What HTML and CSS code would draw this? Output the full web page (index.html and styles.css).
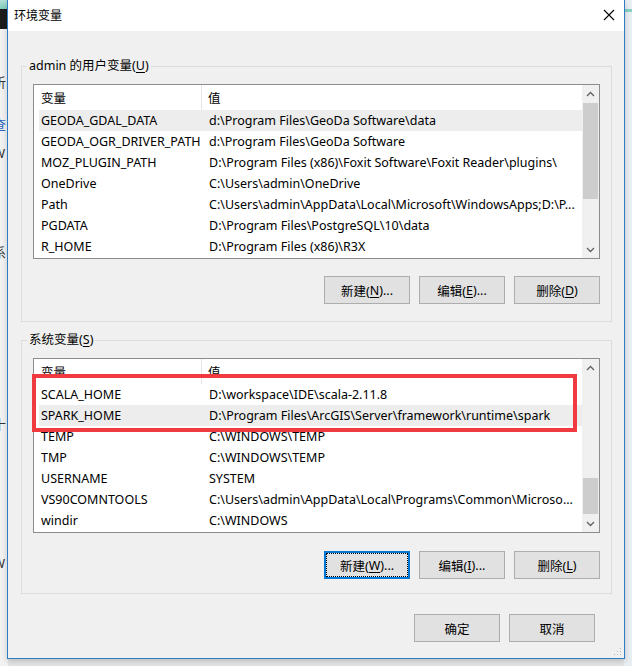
FILE: index.html
```html
<!DOCTYPE html>
<html lang="zh-CN">
<head>
<meta charset="utf-8">
<title>环境变量</title>
<link rel="stylesheet" href="styles.css">
</head>
<body>
<div class="desk">
  <div class="backwin">
    <div class="bw-top"></div>
    <div class="bw-dark"></div>
    <div class="bw-frag f1">析</div>
    <div class="bw-frag f2">查</div>
    <div class="bw-frag f3">W</div>
    <div class="bw-frag f4">系</div>
    <div class="bw-frag f5">十</div>
    <div class="bw-frag f6">W</div>
  </div>
  <div class="rightwin"><div class="rw-band"></div></div>

  <div class="dialog">
    <div class="titlebar">
      <span class="title">环境变量</span>
      <svg class="close" width="12" height="12" viewBox="0 0 12 12"><path d="M1 1 L11 11 M11 1 L1 11" stroke="#000" stroke-width="1.1" fill="none"/></svg>
    </div>
    <div class="body">
      <fieldset class="group g1">
        <legend>admin 的用户变量(<u>U</u>)</legend>
        <div class="list">
          <div class="list-main">
            <div class="hdr"><div class="hc1">变量</div><div class="hc2">值</div></div>
            <div class="row sel"><div class="c1">GEODA_GDAL_DATA</div><div class="c2">d:\Program Files\GeoDa Software\data</div></div>
            <div class="row"><div class="c1">GEODA_OGR_DRIVER_PATH</div><div class="c2">d:\Program Files\GeoDa Software</div></div>
            <div class="row"><div class="c1">MOZ_PLUGIN_PATH</div><div class="c2">D:\Program Files (x86)\Foxit Software\Foxit Reader\plugins\</div></div>
            <div class="row"><div class="c1">OneDrive</div><div class="c2">C:\Users\admin\OneDrive</div></div>
            <div class="row"><div class="c1">Path</div><div class="c2">C:\Users\admin\AppData\Local\Microsoft\WindowsApps;D:\P...</div></div>
            <div class="row"><div class="c1">PGDATA</div><div class="c2">D:\Program Files\PostgreSQL\10\data</div></div>
            <div class="row"><div class="c1">R_HOME</div><div class="c2">D:\Program Files (x86)\R3X</div></div>
          </div>
          <div class="sb">
            <div class="sb-btn"><svg width="9" height="6" viewBox="0 0 9 6"><path d="M1 5 L4.5 1.5 L8 5" stroke="#606060" stroke-width="1.3" fill="none"/></svg></div>
            <div class="sb-track"><div class="thumb t1"></div></div>
            <div class="sb-btn"><svg width="9" height="6" viewBox="0 0 9 6"><path d="M1 1 L4.5 4.5 L8 1" stroke="#606060" stroke-width="1.3" fill="none"/></svg></div>
          </div>
        </div>
        <div class="btns">
          <div class="btn">新建(<u>N</u>)...</div>
          <div class="btn">编辑(<u>E</u>)...</div>
          <div class="btn">删除(<u>D</u>)</div>
        </div>
      </fieldset>

      <fieldset class="group g2">
        <legend>系统变量(<u>S</u>)</legend>
        <div class="list">
          <div class="list-main">
            <div class="hdr"><div class="hc1">变量</div><div class="hc2">值</div></div>
            <div class="row"><div class="c1">SCALA_HOME</div><div class="c2">D:\workspace\IDE\scala-2.11.8</div></div>
            <div class="row sel"><div class="c1">SPARK_HOME</div><div class="c2">D:\Program Files\ArcGIS\Server\framework\runtime\spark</div></div>
            <div class="row"><div class="c1">TEMP</div><div class="c2">C:\WINDOWS\TEMP</div></div>
            <div class="row"><div class="c1">TMP</div><div class="c2">C:\WINDOWS\TEMP</div></div>
            <div class="row"><div class="c1">USERNAME</div><div class="c2">SYSTEM</div></div>
            <div class="row"><div class="c1">VS90COMNTOOLS</div><div class="c2">C:\Users\admin\AppData\Local\Programs\Common\Microso...</div></div>
            <div class="row"><div class="c1">windir</div><div class="c2">C:\WINDOWS</div></div>
          </div>
          <div class="sb">
            <div class="sb-btn"><svg width="9" height="6" viewBox="0 0 9 6"><path d="M1 5 L4.5 1.5 L8 5" stroke="#606060" stroke-width="1.3" fill="none"/></svg></div>
            <div class="sb-track"><div class="thumb t2"></div></div>
            <div class="sb-btn"><svg width="9" height="6" viewBox="0 0 9 6"><path d="M1 1 L4.5 4.5 L8 1" stroke="#606060" stroke-width="1.3" fill="none"/></svg></div>
          </div>
          <div class="mark"></div>
        </div>
        <div class="btns">
          <div class="btn focus">新建(<u>W</u>)...</div>
          <div class="btn">编辑(<u>I</u>)...</div>
          <div class="btn">删除(<u>L</u>)</div>
        </div>
      </fieldset>

      <div class="footer">
        <div class="btn">确定</div>
        <div class="btn">取消</div>
      </div>
    </div>
    <svg class="grip" width="8" height="8" viewBox="0 0 8 8">
      <rect x="6" y="0" width="1" height="1" fill="#b8b8b8"/>
      <rect x="3" y="3" width="1" height="1" fill="#b8b8b8"/><rect x="6" y="3" width="1" height="1" fill="#b8b8b8"/>
      <rect x="0" y="6" width="1" height="1" fill="#b8b8b8"/><rect x="3" y="6" width="1" height="1" fill="#b8b8b8"/><rect x="6" y="6" width="1" height="1" fill="#b8b8b8"/>
    </svg>
  </div>
</div>
</body>
</html>
```

FILE: styles.css
```css
html, body {
  margin: 0;
  padding: 0;
}
body {
  width: 632px;
  height: 666px;
  overflow: hidden;
  font-family: "Noto Sans", "Noto Sans CJK SC", sans-serif;
  font-size: 12px;
  color: #000;
}
.desk {
  position: relative;
  width: 632px;
  height: 666px;
  background: #e4e4e4;
  overflow: hidden;
}
.backwin {
  position: absolute;
  left: 0;
  top: 0;
  width: 8px;
  height: 666px;
  background: #f2f2f2;
  overflow: hidden;
}
.bw-top {
  height: 9px;
  background: linear-gradient(#b4e0d4, #7fcdbb);
}
.bw-dark {
  height: 20px;
  background: #1c1c1c;
}
.bw-frag {
  position: absolute;
  left: -7px;
  font-family: "Noto Sans CJK SC", sans-serif;
  font-size: 13px;
  line-height: 16px;
  color: #333;
}
.f1 { top: 74px; }
.f2 { top: 116px; color: #2a62b8; }
.f3 { top: 145px; font-family: "Noto Sans", sans-serif; }
.f4 { top: 244px; }
.f5 { top: 416px; }
.f6 { top: 555px; font-family: "Noto Sans", sans-serif; }
.rightwin {
  position: absolute;
  right: 0;
  top: 0;
  width: 8px;
  height: 666px;
  background: #e9eef3;
}
.rw-band {
  margin-top: 9px;
  height: 3px;
  background: #86d2c4;
}

.dialog {
  position: absolute;
  left: 7px;
  top: 0;
  width: 616px;
  background: #f0f0f0;
  border: 1px solid #2f7bc6;
  border-top: none;
  box-shadow: 0 2px 6px rgba(0,0,0,0.18);
}
.titlebar {
  height: 31px;
  background: #fff;
  display: flex;
  align-items: center;
  justify-content: space-between;
  padding: 0 9px 0 6px;
}
.title {
  font-family: "Noto Sans CJK SC", sans-serif;
  font-size: 12px;
  line-height: 16px;
  margin-top: -2px;
}
.close {
  display: block;
  margin-top: -2px;
}
.body {
  padding: 27px 12px 16px 13px;
}
.group {
  margin: 0;
  border: 1px solid #dcdcdc;
  padding: 10px 11px 17px 11px;
  min-width: 0;
}
.group legend {
  font-family: "Noto Sans", "Noto Sans CJK SC", sans-serif;
  font-size: 12.5px;
  line-height: 16px;
  padding: 0 2px;
  margin-left: -6px;
}
.g2 {
  margin-top: 10px;
  padding-bottom: 14px;
}
u {
  text-decoration: underline;
  text-underline-offset: 2px;
}
.list {
  position: relative;
  display: flex;
  border: 1px solid #8c8c8c;
  background: #fff;
  height: 173px;
  font-size: 12.5px;
}
.list-main {
  flex: 1;
  min-width: 0;
  overflow: hidden;
}
.hdr {
  display: grid;
  grid-template-columns: 168px 1fr;
  height: 25px;
  line-height: 25px;
}
.hc1 {
  padding-left: 7px;
  border-right: 1px solid #e5e5e5;
  font-family: "Noto Sans CJK SC", sans-serif;
}
.hc2 {
  padding-left: 6px;
  font-family: "Noto Sans CJK SC", sans-serif;
}
.row {
  display: grid;
  grid-template-columns: 163px 1fr;
  margin-left: 5px;
  height: 21px;
  line-height: 21px;
  white-space: nowrap;
}
.row.sel {
  background: #ededed;
}
.c1 {
  padding-left: 2px;
  overflow: hidden;
}
.c2 {
  padding-left: 7px;
  overflow: hidden;
}
.sb {
  width: 17px;
  background: #f0f0f0;
  display: flex;
  flex-direction: column;
}
.sb-btn {
  height: 17px;
  display: flex;
  align-items: center;
  justify-content: center;
}
.sb-btn svg { display: block; }
.sb-track {
  flex: 1;
  display: flex;
  flex-direction: column;
}
.thumb {
  background: #cdcdcd;
  margin: 0 1px;
}
.t1 { margin-top: 1px; height: 96px; }
.t2 { margin-top: 102px; height: 36px; }
.mark {
  position: absolute;
  left: -2px;
  top: 15px;
  width: 537px;
  height: 50px;
  border: 4px solid #ef3a3f;
}
.btns {
  display: flex;
  justify-content: flex-end;
  gap: 9px;
  margin-top: 17px;
}
.g2 .btns { margin-top: 18px; }
.btn {
  width: 84px;
  height: 26px;
  border: 1px solid #adadad;
  background: #e1e1e1;
  display: flex;
  align-items: center;
  justify-content: center;
  font-size: 12.5px;
  font-family: "Noto Sans", "Noto Sans CJK SC", sans-serif;
  white-space: nowrap;
}
.btn.focus {
  border-color: #0078d7;
  box-shadow: inset 0 0 0 1px #0078d7;
  outline: 1px dotted #000;
  outline-offset: -3px;
}
.footer {
  display: flex;
  justify-content: flex-end;
  gap: 9px;
  margin-top: 20px;
  padding-right: 17px;
}
.grip {
  position: absolute;
  right: 2px;
  bottom: 2px;
}
```
